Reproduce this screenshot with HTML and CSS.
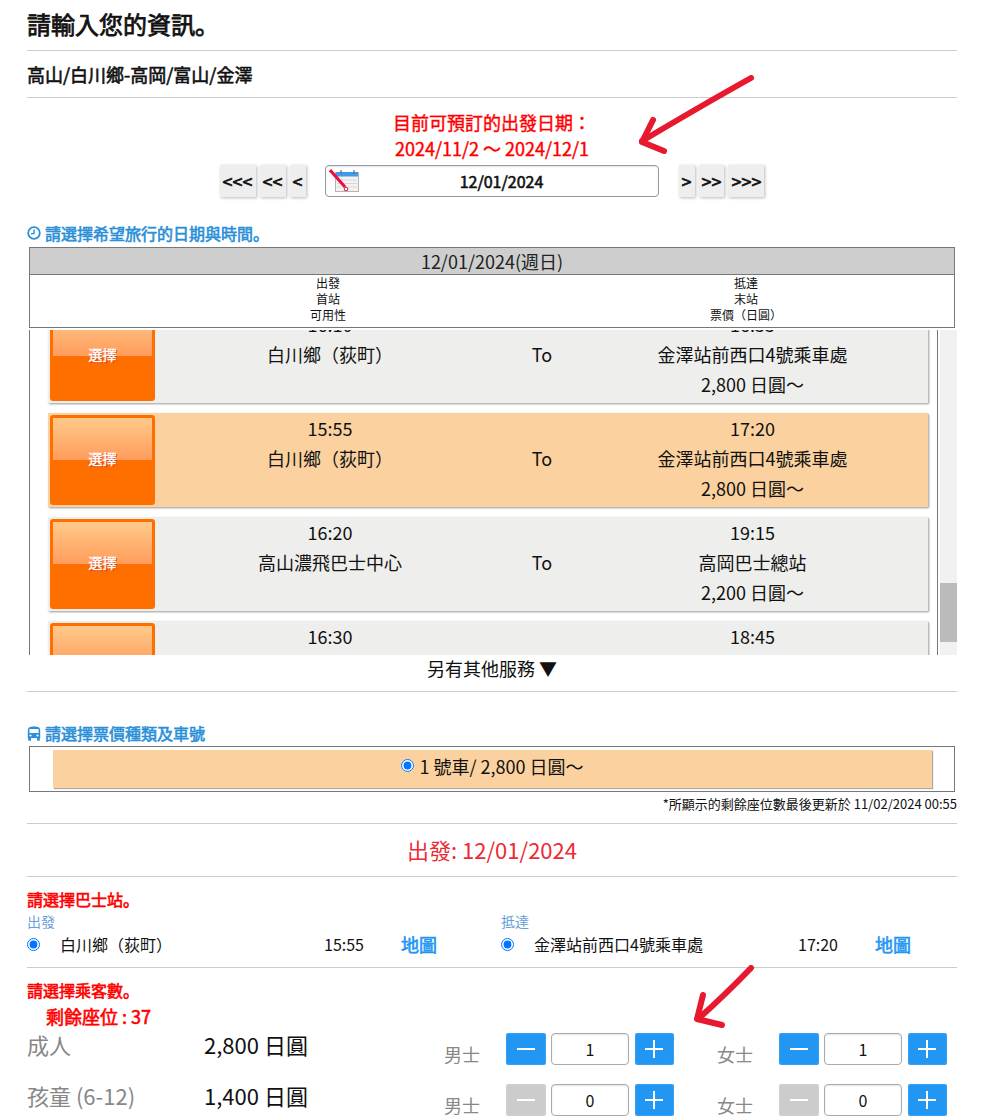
FILE: index.html
```html
<!DOCTYPE html>
<html>
<head>
<meta charset="utf-8">
<title>請輸入您的資訊。</title>
<link rel="stylesheet" href="styles.css">
</head>
<body>
<main class="page">
  <h1 class="title">請輸入您的資訊。</h1>
  <h2 class="route">高山/白川鄉-高岡/富山/金澤</h2>
  <p class="notice">目前可預訂的出發日期：<br>2024/11/2 ～ 2024/12/1</p>
  <div class="datenav">
    <div class="navgroup">
      <button class="navbtn">&lt;&lt;&lt;</button><button class="navbtn">&lt;&lt;</button><button class="navbtn">&lt;</button>
    </div>
    <div class="datefield">
      <svg class="calicon" viewBox="0 0 34 26" width="34" height="26">
        <rect x="6.5" y="4.5" width="23" height="19" fill="#f2f2f2" stroke="#b5b5b5"/>
        <rect x="7" y="4" width="22" height="4.5" fill="#3f9be8"/>
        <g stroke="#d8d8d8"><path d="M8 12H28M8 15.500H28M8 19H28"/></g>
        <path d="M12 2v4M25 2v4" stroke="#667" stroke-width="1.2"/>
        <path d="M1 2 L16 19" stroke="#e6103a" stroke-width="3"/>
        <circle cx="17" cy="21" r="1.8" fill="#fff" stroke="#e6103a"/>
      </svg>
      <span>12/01/2024</span>
    </div>
    <div class="navgroup">
      <button class="navbtn">&gt;</button><button class="navbtn">&gt;&gt;</button><button class="navbtn">&gt;&gt;&gt;</button>
    </div>
  </div>

  <h3 class="seclabel first">
    <svg class="secicon" viewBox="0 0 14 14" width="14" height="14"><circle cx="7" cy="7" r="5.8" fill="none" stroke="#2a8fd8" stroke-width="1.8"/><path d="M7 3.5V7.6H4" fill="none" stroke="#2a8fd8" stroke-width="1.4"/></svg>
    請選擇希望旅行的日期與時間。
  </h3>
  <div class="tablehead">
    <div class="dayrow">12/01/2024(週日)</div>
    <div class="colrow">
      <div>出發<br>首站<br>可用性</div>
      <div>抵達<br>末站<br>票價（日圓）</div>
    </div>
  </div>
  <div class="listwrap">
    <div class="list">
      <div class="card scrolled">
        <button class="pick">選擇</button>
        <div class="cell"><div>16:10</div><div>白川鄉（荻町）</div></div>
        <div class="cell to">To</div>
        <div class="cell"><div>16:55</div><div>金澤站前西口4號乘車處</div><div>2,800 日圓～</div></div>
      </div>
      <div class="card selected">
        <button class="pick">選擇</button>
        <div class="cell"><div>15:55</div><div>白川鄉（荻町）</div></div>
        <div class="cell to">To</div>
        <div class="cell"><div>17:20</div><div>金澤站前西口4號乘車處</div><div>2,800 日圓～</div></div>
      </div>
      <div class="card">
        <button class="pick">選擇</button>
        <div class="cell"><div>16:20</div><div>高山濃飛巴士中心</div></div>
        <div class="cell to">To</div>
        <div class="cell"><div>19:15</div><div>高岡巴士總站</div><div>2,200 日圓～</div></div>
      </div>
      <div class="card">
        <button class="pick">選擇</button>
        <div class="cell"><div>16:30</div><div>高山濃飛巴士中心</div></div>
        <div class="cell to">To</div>
        <div class="cell"><div>18:45</div><div>富山站</div><div>2,200 日圓～</div></div>
      </div>
    </div>
    <div class="scrolltrack"><div class="scrollthumb"></div></div>
  </div>
  <div class="more">另有其他服務 ▼</div>

  <h3 class="seclabel second">
    <svg class="secicon" viewBox="0 0 14 15" width="14" height="15"><path d="M.8 4.500C.8 1.200 3 .4 7 .4s6.200 .8 6.200 4.100V12H.8Z" fill="#2a8fd8"/><rect x="2.400" y="3" width="9.200" height="4" fill="#fff"/><rect x="1.200" y="12" width="2.800" height="2.600" fill="#2a8fd8"/><rect x="10" y="12" width="2.800" height="2.600" fill="#2a8fd8"/><circle cx="3.500" cy="9.500" r="1.100" fill="#fff"/><circle cx="10.500" cy="9.500" r="1.100" fill="#fff"/></svg>
    請選擇票價種類及車號
  </h3>
  <div class="farebox">
    <label class="fare"><input type="radio" class="radio" checked> 1 號車/ 2,800 日圓～</label>
  </div>
  <p class="footnote">*所顯示的剩餘座位數最後更新於 11/02/2024 00:55</p>
  <div class="depart">出發: 12/01/2024</div>

  <p class="redlabel stoplabel">請選擇巴士站。</p>
  <div class="stops">
    <div class="stop">
      <div class="stophead">出發</div>
      <div class="stoprow">
        <input type="radio" class="radio" checked>
        <span>白川鄉（荻町）</span><span>15:55</span><a class="maplink">地圖</a>
      </div>
    </div>
    <div class="stop">
      <div class="stophead">抵達</div>
      <div class="stoprow">
        <input type="radio" class="radio" checked>
        <span>金澤站前西口4號乘車處</span><span>17:20</span><a class="maplink">地圖</a>
      </div>
    </div>
  </div>

  <p class="redlabel paxlabel">請選擇乘客數。</p>
  <p class="seats">剩餘座位 : 37</p>
  <div class="pax">
    <div class="paxname">成人</div>
    <div class="paxprice">2,800 日圓</div>
    <div class="gender">男士</div>
    <div class="stepper">
      <button class="step"><svg viewBox="0 0 18 18" width="18" height="18"><path d="M0 9H18" stroke="#fff" stroke-width="2"/></svg></button>
      <input class="count" value="1" readonly>
      <button class="step"><svg viewBox="0 0 18 18" width="18" height="18"><path d="M0 9H18M9 0V18" stroke="#fff" stroke-width="2"/></svg></button>
    </div>
    <div class="gender">女士</div>
    <div class="stepper">
      <button class="step"><svg viewBox="0 0 18 18" width="18" height="18"><path d="M0 9H18" stroke="#fff" stroke-width="2"/></svg></button>
      <input class="count" value="1" readonly>
      <button class="step"><svg viewBox="0 0 18 18" width="18" height="18"><path d="M0 9H18M9 0V18" stroke="#fff" stroke-width="2"/></svg></button>
    </div>

    <div class="paxname">孩童 (6-12)</div>
    <div class="paxprice">1,400 日圓</div>
    <div class="gender">男士</div>
    <div class="stepper">
      <button class="step off"><svg viewBox="0 0 18 18" width="18" height="18"><path d="M0 9H18" stroke="#fff" stroke-width="2"/></svg></button>
      <input class="count" value="0" readonly>
      <button class="step"><svg viewBox="0 0 18 18" width="18" height="18"><path d="M0 9H18M9 0V18" stroke="#fff" stroke-width="2"/></svg></button>
    </div>
    <div class="gender">女士</div>
    <div class="stepper">
      <button class="step off"><svg viewBox="0 0 18 18" width="18" height="18"><path d="M0 9H18" stroke="#fff" stroke-width="2"/></svg></button>
      <input class="count" value="0" readonly>
      <button class="step"><svg viewBox="0 0 18 18" width="18" height="18"><path d="M0 9H18M9 0V18" stroke="#fff" stroke-width="2"/></svg></button>
    </div>
  </div>
</main>

<svg class="arrow arrow-top" viewBox="0 0 120 80" width="120" height="80">
  <path d="M115 3 Q70 28 6 66" fill="none" stroke="#e6192f" stroke-width="6" stroke-linecap="round"/>
  <path d="M17 45 L6 67 L28 76" fill="none" stroke="#e6192f" stroke-width="6" stroke-linecap="round" stroke-linejoin="round"/>
</svg>
<svg class="arrow arrow-bottom" viewBox="0 0 64 64" width="64" height="64">
  <path d="M58 3 Q30 32 5 54" fill="none" stroke="#e6192f" stroke-width="6" stroke-linecap="round"/>
  <path d="M10 30 L4 54 L29 60" fill="none" stroke="#e6192f" stroke-width="6" stroke-linecap="round" stroke-linejoin="round"/>
</svg>
</body>
</html>
```
FILE: styles.css
```css
* { box-sizing: border-box; }
html, body { margin: 0; padding: 0; }
body {
  position: relative;
  width: 997px;
  height: 1119px;
  overflow: hidden;
  background: #fff;
  color: #111;
  font-family: "Noto Sans CJK JP", "Noto Sans", sans-serif;
}
button, input { font-family: inherit; }
.page { width: 930px; margin-left: 27px; }

/* The reference's bold is a thickened regular face: same advances, heavier strokes. */
.title, .route, .notice, .navbtn, .datefield, .seclabel, .pick, .redlabel, .maplink, .seats {
  font-weight: 400;
  -webkit-text-stroke: .6px currentColor;
}

.title {
  margin: 0;
  height: 51px;
  border-bottom: 1px solid #ccc;
  font-size: 24px;
  line-height: 48px;
  -webkit-text-stroke-width: .75px;
}
.route {
  margin: 0;
  height: 47px;
  border-bottom: 1px solid #ccc;
  font-size: 18px;
  line-height: 46px;
}
.notice {
  margin: 11px 0 4px;
  text-align: center;
  color: #f00;
  font-size: 18px;
  line-height: 26px;
  -webkit-text-stroke-width: .4px;
}
.datenav { display: flex; justify-content: center; gap: 19px; height: 32px; }
.navgroup { display: flex; gap: 4px; }
.navbtn {
  height: 32px;
  padding: 0 3px;
  border: 0;
  background: #eee;
  box-shadow: 1px 1px 3px #bbb;
  color: #111;
  font-size: 18px;
}
.datefield {
  position: relative;
  display: flex;
  align-items: center;
  justify-content: center;
  width: 334px;
  margin-right: 1px;
  padding-left: 20px;
  border: 1px solid #999;
  border-radius: 4px;
  box-shadow: inset 0 1px 2px #dde6ee;
  font-size: 16px;
}
.calicon { position: absolute; left: 3px; top: 2px; }

.seclabel {
  display: flex;
  align-items: center;
  gap: 4px;
  margin: 0;
  color: #2a8fd8;
  font-size: 16px;
  line-height: 22px;
}
.seclabel.first { margin-top: 25px; margin-bottom: 3px; }
.seclabel.second { margin-top: 30px; margin-bottom: 2px; }
.secicon { flex: none; }

.tablehead { width: 926px; margin-left: 2px; border: 1px solid #777; }
.dayrow {
  height: 27px;
  border-bottom: 1px solid #777;
  background: #cecece;
  text-align: center;
  font-size: 18px;
  line-height: 27px;
  color: #222;
}
.colrow {
  display: grid;
  grid-template-columns: 596px 240px;
  height: 52px;
  text-align: center;
  font-size: 12px;
  line-height: 16px;
}

.listwrap { display: flex; height: 325px; margin-top: 2px; overflow: hidden; }
.list {
  width: 909px;
  margin-left: 2px;
  padding: 0 9px 0 18px;
  border-left: 1px solid #777;
  border-right: 1px solid #777;
  overflow: hidden;
}
.card {
  display: grid;
  grid-template-columns: 107px 350px 74px 347px;
  height: 94px;
  margin-bottom: 10px;
  background: #eeeeec;
  box-shadow: 1px 1px 2px #999;
  text-align: center;
  font-size: 18px;
  line-height: 30px;
}
.card.scrolled { margin-top: -21px; }
.card.selected { background: #fbd29f; }
.pick {
  align-self: start;
  width: 105px;
  height: 90px;
  margin: 2px 0 0 2px;
  padding: 0 0 4px;
  border: 3px solid #ff6f00;
  border-radius: 3px;
  background: linear-gradient(#ffc98a, #ff9d5c) top / 100% 42px no-repeat, #ff6f00;
  background-origin: padding-box;
  color: #fff;
  font-size: 14px;
  text-shadow: 1px 1px 1px #d02000;
  -webkit-text-stroke-width: .4px;
}
.to { line-height: 30px; padding-top: 30px; }

.scrolltrack { width: 17px; margin-left: 2px; background: #f1f1f1; }
.scrollthumb { width: 17px; height: 59px; margin-top: 253px; background: #bbb; }

.more {
  height: 37px;
  border-bottom: 1px solid #ccc;
  text-align: center;
  font-size: 18px;
  line-height: 27px;
}

.farebox { width: 926px; height: 46px; margin-left: 2px; padding: 3px 0 0 23px; border: 1px solid #777; }
.fare {
  display: flex;
  align-items: center;
  justify-content: center;
  gap: 1px;
  width: 879px;
  height: 38px;
  padding-bottom: 7px;
  background: #fbd29f;
  box-shadow: 1px 1px 1px #aaa;
  font-size: 18px;
  white-space: pre;
}
.radio { width: 13px; height: 13px; margin: 0; flex: none; }
.footnote {
  margin: 0;
  height: 32px;
  border-bottom: 1px solid #ccc;
  text-align: right;
  font-size: 13px;
  line-height: 24px;
}
.depart {
  height: 53px;
  border-bottom: 1px solid #ccc;
  text-align: center;
  color: #ee2a35;
  font-size: 22px;
  line-height: 51px;
}
.redlabel { margin: 0; color: #f00; font-size: 16px; line-height: 20px; }
.stoplabel { margin-top: 12px; }
.stops { display: grid; grid-template-columns: 474px 456px; height: 59px; padding-top: 1px; border-bottom: 1px solid #ccc; }
.stophead { height: 21px; color: #6aa0d8; font-size: 14px; line-height: 23px; }
.stoprow {
  display: grid;
  grid-template-columns: 33px 264px 77px auto;
  align-items: center;
  height: 24px;
  font-size: 16px;
}
.maplink { color: #2196f3; font-size: 18px; }
.paxlabel { margin-top: 12px; }
.seats { margin: 5px 0 0 19px; color: #f00; font-size: 18px; line-height: 22px; }
.pax {
  display: grid;
  grid-template-columns: 177px 240px 62px 211px 62px auto;
  grid-auto-rows: 32px;
  row-gap: 19px;
  margin-top: 6px;
}
.paxname { color: #888; font-size: 22px; line-height: 23px; }
.paxprice { font-size: 22px; line-height: 23px; }
.gender { color: #888; font-size: 18px; line-height: 43px; }
.stepper { display: flex; align-items: flex-start; gap: 5.5px; }
.step {
  display: flex;
  align-items: center;
  justify-content: center;
  flex: none;
  width: 39.5px;
  height: 32px;
  padding: 0;
  border: 0;
  border-radius: 2px;
  background: #2196f3;
  box-shadow: inset 0 0 2px rgba(255, 255, 255, .35);
}
.step.off { background: #ccc; }
.count {
  width: 78px;
  height: 32px;
  padding: 0;
  border: 1px solid #aaa;
  border-radius: 4px;
  box-shadow: inset 0 1px 2px #dde6ee;
  text-align: center;
  color: #111;
  font-size: 16px;
}
.arrow { position: absolute; }
.arrow-top { left: 636px; top: 75px; }
.arrow-bottom { left: 693px; top: 965px; }
```
